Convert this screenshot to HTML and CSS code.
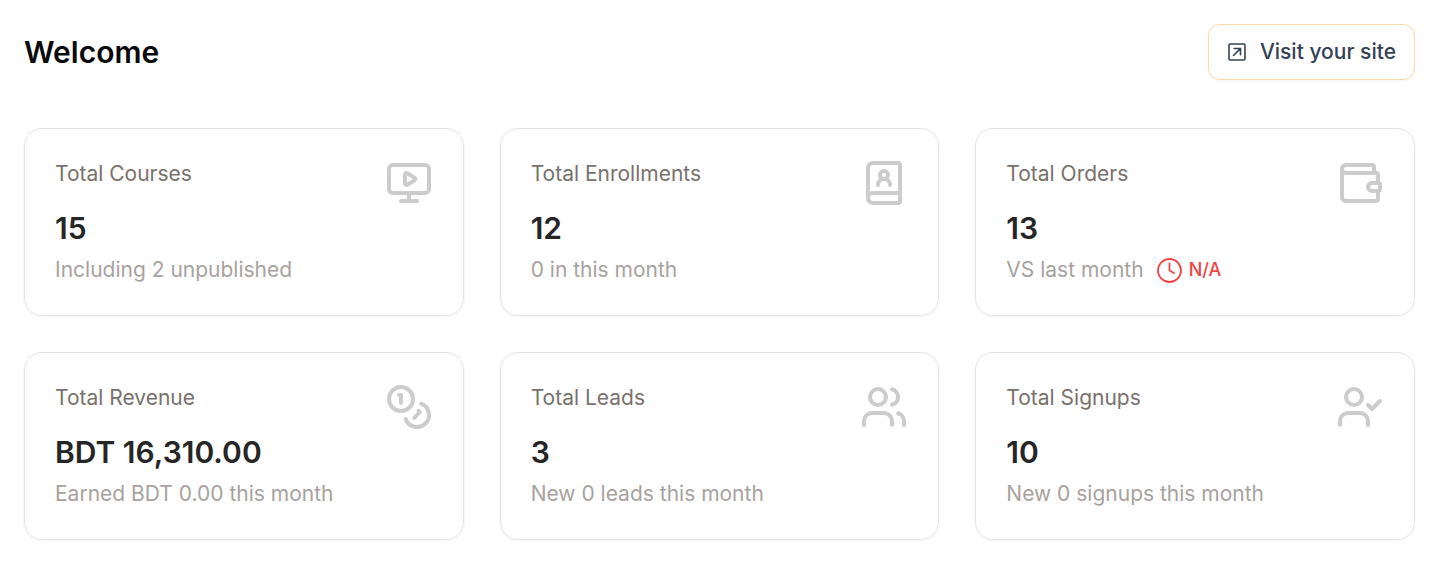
FILE: index.html
```html
<!DOCTYPE html>
<html lang="en">
<head>
    <meta charset="UTF-8">
    <meta name="viewport" content="width=device-width, initial-scale=1.0">
    <title>Welcome</title>
    <link rel="stylesheet" href="styles.css">
</head>
<body>
    <header class="header">
        <h1 class="title">Welcome</h1>
        <a class="visit" href="#">
            <svg class="visit-icon" viewBox="0 0 18 18" aria-hidden="true">
                <rect x="1" y="1" width="16" height="16" rx="1.2"/>
                <path d="M5.5 12.5 12.5 5.5M6.2 5.5h6.3v6.3"/>
            </svg>
            Visit your site
        </a>
    </header>

    <main class="cards">
        <section class="card">
            <div class="card-body">
                <h2 class="label">Total Courses</h2>
                <p class="value">15</p>
                <p class="note">Including 2 unpublished</p>
            </div>
            <svg class="icon" viewBox="0 0 24 24" aria-hidden="true">
                <path d="M10 7.75a.75.75 0 0 1 1.142-.638l3.664 2.249a.75.75 0 0 1 0 1.278l-3.664 2.25a.75.75 0 0 1-1.142-.64z"/>
                <path d="M12 17v4M8 21h8"/>
                <rect x="2" y="3" width="20" height="14" rx="2"/>
            </svg>
        </section>

        <section class="card">
            <div class="card-body">
                <h2 class="label">Total Enrollments</h2>
                <p class="value">12</p>
                <p class="note">0 in this month</p>
            </div>
            <svg class="icon" viewBox="0 0 24 24" aria-hidden="true">
                <path d="M15 13a3 3 0 1 0-6 0"/>
                <path d="M4 19.5v-15A2.5 2.5 0 0 1 6.5 2H19a1 1 0 0 1 1 1v18a1 1 0 0 1-1 1H6.5a1 1 0 0 1 0-5H20"/>
                <circle cx="12" cy="8" r="2"/>
            </svg>
        </section>

        <section class="card">
            <div class="card-body">
                <h2 class="label">Total Orders</h2>
                <p class="value">13</p>
                <p class="note">
                    VS last month
                    <span class="trend">
                        <svg class="trend-icon" viewBox="0 0 26 26" aria-hidden="true">
                            <circle cx="12.5" cy="13.5" r="11.5"/>
                            <path d="M12.5 6.5v7l4.500 2.500"/>
                        </svg>
                        N/A
                    </span>
                </p>
            </div>
            <svg class="icon" viewBox="0 0 24 24" aria-hidden="true">
                <path d="M19 7V4a1 1 0 0 0-1-1H5a2 2 0 0 0 0 4h15a1 1 0 0 1 1 1v4h-3a2 2 0 0 0 0 4h3a1 1 0 0 0 1-1v-2a1 1 0 0 0-1-1"/>
                <path d="M3 5v14a2 2 0 0 0 2 2h15a1 1 0 0 0 1-1v-4"/>
            </svg>
        </section>

        <section class="card">
            <div class="card-body">
                <h2 class="label">Total Revenue</h2>
                <p class="value">BDT 16,310.00</p>
                <p class="note">Earned BDT 0.00 this month</p>
            </div>
            <svg class="icon" viewBox="0 0 24 24" aria-hidden="true">
                <circle cx="8" cy="8" r="6"/>
                <path d="M18.09 10.37A6 6 0 1 1 10.34 18"/>
                <path d="M7 6h1v4"/>
                <path d="m16.71 13.88.7.71-2.82 2.82"/>
            </svg>
        </section>

        <section class="card">
            <div class="card-body">
                <h2 class="label">Total Leads</h2>
                <p class="value">3</p>
                <p class="note">New 0 leads this month</p>
            </div>
            <svg class="icon" viewBox="0 0 24 24" aria-hidden="true">
                <path d="M16 21v-2a4 4 0 0 0-4-4H6a4 4 0 0 0-4 4v2"/>
                <circle cx="9" cy="7" r="4"/>
                <path d="M22 21v-2a4 4 0 0 0-3-3.87"/>
                <path d="M16 3.13a4 4 0 0 1 0 7.75"/>
            </svg>
        </section>

        <section class="card">
            <div class="card-body">
                <h2 class="label">Total Signups</h2>
                <p class="value">10</p>
                <p class="note">New 0 signups this month</p>
            </div>
            <svg class="icon" viewBox="0 0 24 24" aria-hidden="true">
                <path d="M16 21v-2a4 4 0 0 0-4-4H6a4 4 0 0 0-4 4v2"/>
                <circle cx="9" cy="7" r="4"/>
                <path d="m16 11 2 2 4-4"/>
            </svg>
        </section>
    </main>
</body>
</html>
```

FILE: styles.css
```css
* {
    box-sizing: border-box;
}
body {
    margin: 0;
    padding: 24px 23px 24px 24px;
    font-family: Inter, "Liberation Sans", sans-serif;
    font-size: 21px;
    line-height: 30px;
    color: #0a0a0a;
    background-color: #fff;
}
h1, h2, p {
    margin: 0;
}
svg {
    flex-shrink: 0;
    fill: none;
    stroke: currentColor;
    stroke-linecap: round;
    stroke-linejoin: round;
}

.header {
    display: flex;
    justify-content: space-between;
    align-items: center;
    margin-bottom: 48px;
}
.title {
    font-size: 30px;
    font-weight: 600;
    line-height: 36px;
}
.visit {
    display: flex;
    align-items: center;
    gap: 14px;
    padding: 12px 18px 12px 19px;
    border: 1px solid #fed7aa;
    border-radius: 12px;
    box-shadow: 0 1px 3px rgba(0, 0, 0, 0.05);
    color: #334155;
    font-weight: 500;
    text-decoration: none;
}
.visit-icon {
    width: 18px;
    height: 18px;
    stroke-width: 1.6;
}

.cards {
    display: grid;
    grid-template-columns: repeat(3, 1fr);
    gap: 36px;
}
.card {
    display: flex;
    justify-content: space-between;
    align-items: flex-start;
    padding: 30px;
    border: 1px solid #e5e5e5;
    border-radius: 18px;
    box-shadow: 0 1px 3px rgba(0, 0, 0, 0.05);
}
.label {
    font-size: 21px;
    font-weight: 400;
    color: #78716c;
}
.value {
    margin: 21px 0 9px;
    font-size: 30px;
    font-weight: 600;
    line-height: 36px;
    color: #262626;
}
.note {
    display: flex;
    align-items: center;
    gap: 13px;
    color: #a8a29e;
}
.icon {
    width: 48px;
    height: 48px;
    stroke-width: 2;
    color: #ccc;
}
.trend {
    display: flex;
    align-items: center;
    gap: 6px;
    font-size: 18px;
    font-weight: 500;
    color: #ef4444;
}
.trend-icon {
    width: 26px;
    height: 26px;
    stroke-width: 1.8;
}
.visit {
    min-height: 56px;
}
```
